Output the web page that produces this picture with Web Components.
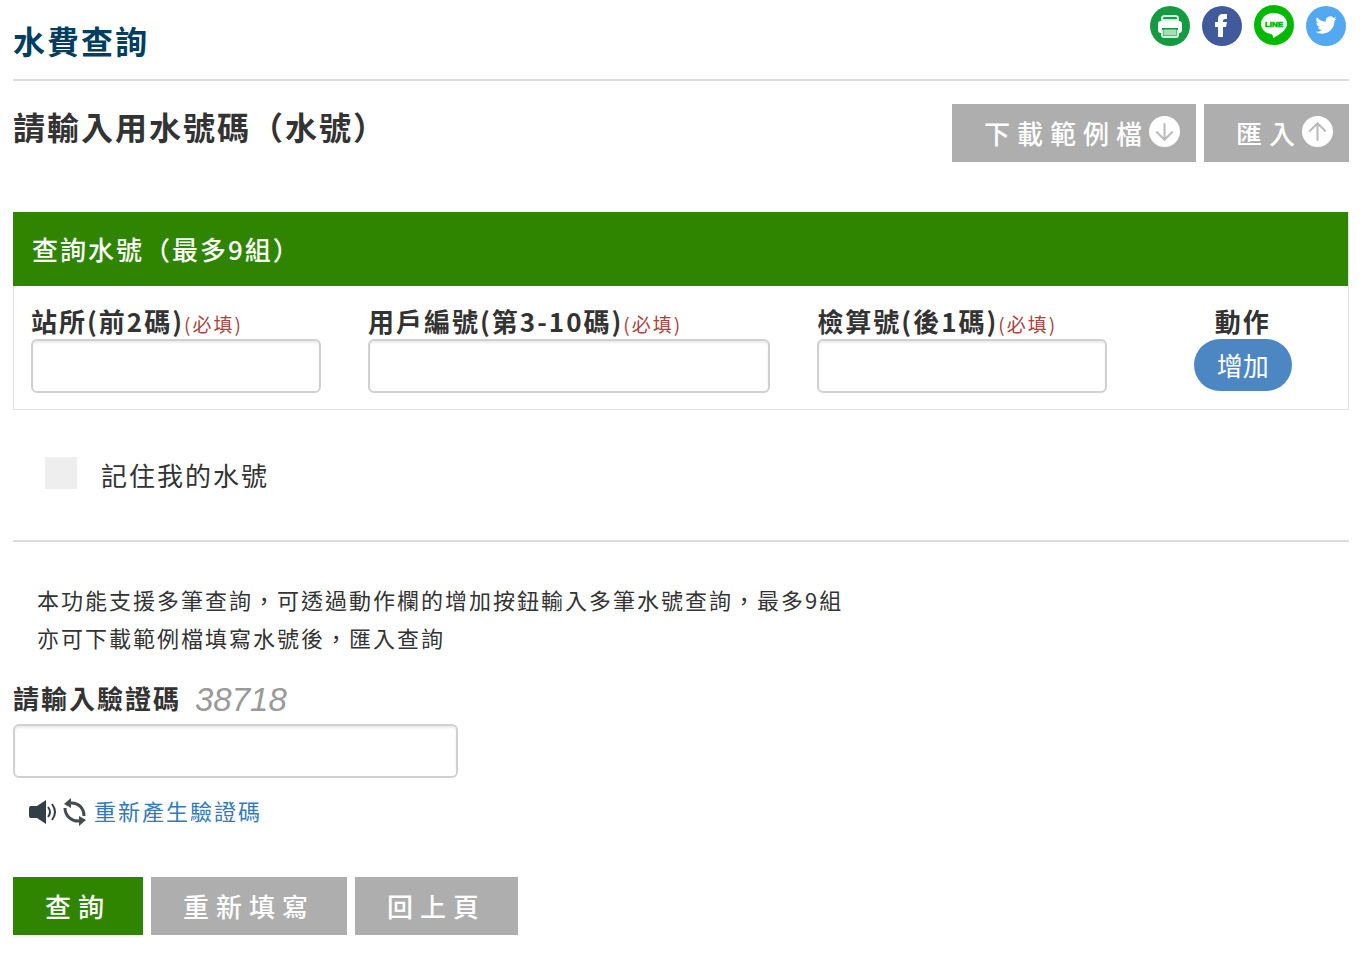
<!DOCTYPE html>
<html lang="zh-Hant">
<head>
<meta charset="utf-8">
<meta name="viewport" content="width=device-width, initial-scale=1">
<title>水費查詢</title>
<style>
    body {
        margin: 0;
        background: #fff;
        color: #333;
        font: 26px/36px "Noto Sans CJK TC", sans-serif;
        letter-spacing: 2px;
    }
</style>
</head>
<body>
<water-page>
    <page-header slot="header">水費查詢</page-header>

    <section-bar slot="intro">
        請輸入用水號碼（水號）
        <flat-button slot="actions" icon="down">下載範例檔</flat-button>
        <flat-button slot="actions" icon="up">匯入</flat-button>
    </section-bar>

    <query-panel>
        <span slot="title">查詢水號（最多9組）</span>
        <text-field name="station" required-note="(必填)">站所(前2碼)</text-field>
        <text-field name="user" required-note="(必填)">用戶編號(第3-10碼)</text-field>
        <text-field name="check" required-note="(必填)">檢算號(後1碼)</text-field>
        <add-action>動作</add-action>
    </query-panel>

    <remember-check>記住我的水號</remember-check>

    <help-text>
        <p>本功能支援多筆查詢，可透過動作欄的增加按鈕輸入多筆水號查詢，最多9組</p>
        <p>亦可下載範例檔填寫水號後，匯入查詢</p>
    </help-text>

    <captcha-field code="38718">請輸入驗證碼</captcha-field>

    <flat-button slot="buttons" primary>查詢</flat-button>
    <flat-button slot="buttons">重新填寫</flat-button>
    <flat-button slot="buttons">回上頁</flat-button>
</water-page>

<script>
    const INPUT_CSS = `
        input[type="text"] {
            display: block;
            box-sizing: border-box;
            width: 100%;
            height: 54px;
            padding: 8px 16px;
            border: 2px solid #d0d0d0;
            border-radius: 6px;
            background: #fff;
            box-shadow: inset 0 2px 2px rgba(0, 0, 0, .075);
            color: inherit;
            font: inherit;
        }
    `;

    class WaterPage extends HTMLElement {
        constructor() {
            super();
            const shadow = this.attachShadow({ mode: 'open' });
            shadow.innerHTML = `
            <style>
                :host {
                    display: block;
                    padding: 0 17px 30px 13px;
                }
                footer {
                    display: flex;
                    flex-wrap: wrap;
                    gap: 8px;
                    margin-top: 51px;
                }
            </style>
            <slot name="header"></slot>
            <main>
                <slot name="intro"></slot>
                <slot></slot>
            </main>
            <footer><slot name="buttons"></slot></footer>
            `;
        }
    }

    class PageHeader extends HTMLElement {
        constructor() {
            super();
            const shadow = this.attachShadow({ mode: 'open' });
            shadow.innerHTML = `
            <style>
                :host {
                    display: flex;
                    justify-content: space-between;
                    align-items: flex-start;
                    border-bottom: 2px solid #dcdcdc;
                }
                h1 {
                    margin: 16px 0 15px;
                    color: #003e5f;
                    font-size: 32px;
                    line-height: 48px;
                }
                nav {
                    display: flex;
                    gap: 12px;
                    padding: 6px 3px 0 0;
                }
                a, svg {
                    display: block;
                    width: 40px;
                    height: 40px;
                    overflow: visible;
                }
                text {
                    font: bold 8px "Liberation Sans", sans-serif;
                    letter-spacing: 0;
                }
            </style>
            <h1><slot></slot></h1>
            <nav>
                <a href="#print" aria-label="友善列印">
                    <svg viewBox="0 0 40 40">
                        <circle cx="20" cy="20" r="20" fill="#149b42"/>
                        <path d="M12 14v-2q0-2 3-2h10q3 0 3 2v2z" fill="#149b42" stroke="#d5eedc" stroke-width="2"/>
                        <path d="M11 15h18q3 0 3 3v6q0 3-3 3h-1v-5H12v5h-1q-3 0-3-3v-6q0-3 3-3z" fill="#fff"/>
                        <rect x="13" y="23" width="14" height="7" rx="1" fill="#a9dab9" stroke="#149b42"/>
                        <path d="M12 24v5q0 2 2 2h12q2 0 2-2v-5" fill="none" stroke="#d5eedc" stroke-width="2"/>
                    </svg>
                </a>
                <a href="#facebook" aria-label="Facebook">
                    <svg viewBox="0 0 40 40">
                        <circle cx="20" cy="20" r="20" fill="#405a9c"/>
                        <path d="M16 31V21h-3v-5h3v-3q0-5 5-5h4v5h-2q-2 0-2 2v1h4l-1 5h-3v10z" fill="#fff"/>
                    </svg>
                </a>
                <a href="#line" aria-label="LINE">
                    <svg viewBox="0 1 40 40">
                        <circle cx="20" cy="20" r="20" fill="#00b900"/>
                        <path d="M20 8c-8 0-13 5-13 11 0 5 4 9 10 10 2 1 2 2 2 4 6-3 14-8 14-14 0-6-5-11-13-11z" fill="#fff"/>
                        <text x="20" y="22" text-anchor="middle" fill="#00b900" stroke="#00b900" stroke-width=".6">LINE</text>
                    </svg>
                </a>
                <a href="#twitter" aria-label="Twitter">
                    <svg viewBox="0 0 40 40">
                        <circle cx="20" cy="20" r="20" fill="#52a9f0"/>
                        <path transform="translate(9.5 8.5) scale(.88)" fill="#fff" d="M23.95 4.57a10 10 0 0 1-2.82.77 4.96 4.96 0 0 0 2.16-2.72c-.95.55-2 .95-3.13 1.18a4.92 4.92 0 0 0-8.38 4.48C7.69 8.1 4.07 6.13 1.64 3.16a4.92 4.92 0 0 0 1.52 6.57 4.9 4.9 0 0 1-2.23-.61v.06c0 2.38 1.7 4.37 3.95 4.82a5 5 0 0 1-2.21.09 4.94 4.94 0 0 0 4.6 3.42A9.87 9.87 0 0 1 0 19.54a14 14 0 0 0 7.55 2.21c9.05 0 14-7.5 14-13.98 0-.21 0-.42-.02-.63a9.94 9.94 0 0 0 2.42-2.57z"/>
                    </svg>
                </a>
            </nav>
            `;
        }
    }

    class SectionBar extends HTMLElement {
        constructor() {
            super();
            const shadow = this.attachShadow({ mode: 'open' });
            shadow.innerHTML = `
            <style>
                :host {
                    display: flex;
                    justify-content: space-between;
                    align-items: flex-start;
                    margin: 23px 0 50px;
                }
                h2 {
                    margin: 0;
                    font-size: 32px;
                    line-height: 44px;
                }
                div {
                    display: flex;
                    gap: 8px;
                }
            </style>
            <h2><slot></slot></h2>
            <div><slot name="actions"></slot></div>
            `;
        }
    }

    class FlatButton extends HTMLElement {
        constructor() {
            super();
            const shadow = this.attachShadow({ mode: 'open' });
            const arrows = {
                down: 'M15 7v16M7 15l8 8 8-8',
                up: 'M15 24V7M7 15l8-8 8 8'
            };
            const arrow = arrows[this.getAttribute('icon')];
            const icon = arrow ? `
                <svg viewBox="0 0 30 30" aria-hidden="true">
                    <circle cx="15" cy="15" r="15" fill="#fff"/>
                    <path d="${arrow}" fill="none" stroke="#bbb" stroke-width="2"/>
                </svg>` : '';
            shadow.innerHTML = `
            <style>
                :host { display: block; }
                button {
                    display: flex;
                    align-items: center;
                    height: 58px;
                    padding: 0 32px;
                    border: 0;
                    background: #aeaeae;
                    color: #fff;
                    font: inherit;
                    font-weight: 500;
                    letter-spacing: 7px;
                    white-space: nowrap;
                    cursor: pointer;
                }
                :host([primary]) button { background: #308500; }
                :host([icon]) button { padding-right: 16px; }
                svg {
                    width: 31px;
                    height: 31px;
                    margin-bottom: 4px;
                }
            </style>
            <button type="button"><slot></slot>${icon}</button>
            `;
        }
    }

    class QueryPanel extends HTMLElement {
        constructor() {
            super();
            const shadow = this.attachShadow({ mode: 'open' });
            shadow.innerHTML = `
            <style>
                :host {
                    display: block;
                    border: 1px solid #e0e0e0;
                }
                header {
                    margin: -1px 0 0 -1px;
                    padding: 19px;
                    background: #308500;
                    color: #fff;
                    font-weight: 500;
                }
                .row {
                    display: grid;
                    grid-template-columns: 24fr 32fr 24fr 15fr;
                    padding: 17px 0 16px;
                }
                .row ::slotted(text-field) {
                    margin: 0 30px 0 17px;
                }
            </style>
            <header><slot name="title"></slot></header>
            <div class="row"><slot></slot></div>
            `;
        }
    }

    class TextField extends HTMLElement {
        constructor() {
            super();
            const shadow = this.attachShadow({ mode: 'open' });
            shadow.innerHTML = `
            <style>
                :host { display: block; }
                label {
                    display: block;
                    font-weight: bold;
                    line-height: 36px;
                    white-space: nowrap;
                }
                small {
                    color: #a94442;
                    font-size: 19px;
                    font-weight: normal;
                    line-height: 1;
                }
                ${INPUT_CSS}
            </style>
            <label for="field"><slot></slot><small>${this.getAttribute('required-note')}</small></label>
            <input type="text" id="field" name="${this.getAttribute('name')}"/>
            `;
        }
    }

    class AddAction extends HTMLElement {
        constructor() {
            super();
            const shadow = this.attachShadow({ mode: 'open' });
            shadow.innerHTML = `
            <style>
                :host {
                    display: flex;
                    flex-direction: column;
                    align-items: center;
                    font-weight: bold;
                }
                button {
                    width: 98px;
                    height: 52px;
                    padding: 0;
                    border: 0;
                    border-radius: 26px;
                    background: #4c87c3;
                    color: #fff;
                    font: inherit;
                    font-weight: normal;
                    letter-spacing: 0;
                    cursor: pointer;
                }
            </style>
            <slot></slot>
            <button type="button">增加</button>
            `;
        }
    }

    class RememberCheck extends HTMLElement {
        constructor() {
            super();
            const shadow = this.attachShadow({ mode: 'open' });
            shadow.innerHTML = `
            <style>
                :host {
                    display: flex;
                    padding: 47px 32px;
                    border-bottom: 2px solid #dcdcdc;
                }
                label {
                    display: flex;
                    align-items: flex-start;
                    gap: 24px;
                    line-height: 36px;
                }
                input {
                    appearance: none;
                    width: 32px;
                    height: 32px;
                    margin: 0;
                    background: #eee;
                }
                input:checked { background: #308500; }
            </style>
            <label><input type="checkbox"/><slot></slot></label>
            `;
        }
    }

    class HelpText extends HTMLElement {
        constructor() {
            super();
            const shadow = this.attachShadow({ mode: 'open' });
            shadow.innerHTML = `
            <style>
                :host {
                    display: block;
                    padding: 38px 24px 24px;
                    font-size: 22px;
                    line-height: 38px;
                }
                ::slotted(p) { margin: 0; }
            </style>
            <slot></slot>
            `;
        }
    }

    class CaptchaField extends HTMLElement {
        constructor() {
            super();
            const shadow = this.attachShadow({ mode: 'open' });
            shadow.innerHTML = `
            <style>
                :host { display: block; }
                .caption {
                    display: flex;
                    gap: 14px;
                    height: 44px;
                    font-weight: bold;
                }
                .code {
                    color: #999;
                    font: italic 33px/40px "Liberation Sans", sans-serif;
                    letter-spacing: 0;
                }
                .box { width: calc(100% / 3); }
                .tools {
                    display: flex;
                    align-items: center;
                    gap: 6px;
                    margin: 16px 0 0 16px;
                    font-size: 22px;
                    line-height: 32px;
                }
                button {
                    padding: 0;
                    border: 0;
                    background: none;
                    cursor: pointer;
                }
                a {
                    display: flex;
                    align-items: center;
                    gap: 7px;
                    color: #337ab7;
                    text-decoration: none;
                }
                svg {
                    display: block;
                    padding-top: 4px;
                }
                ${INPUT_CSS}
            </style>
            <div class="caption">
                <label for="captcha"><slot></slot></label>
                <span class="code">${this.getAttribute('code')}</span>
            </div>
            <div class="box"><input type="text" id="captcha" name="captcha"/></div>
            <div class="tools">
                <button type="button" aria-label="播放驗證碼">
                    <svg width="28" height="26" viewBox="0 0 28 26">
                        <path d="M2 7h6l9-6v24l-9-6H2q-2 0-2-2V9q0-2 2-2z" fill="#333f46"/>
                        <path d="M19 8q4 5 0 10M23 5q6 8 0 16" fill="none" stroke="#333f46" stroke-width="2"/>
                    </svg>
                </button>
                <a href="#refresh">
                    <svg width="24" height="28" viewBox="0 0 24 28" aria-hidden="true">
                        <path d="M7 5c8-1 14 5 14 13M17 23C9 24 2 18 2 10" fill="none" stroke="#444c50" stroke-width="3"/>
                        <path d="M1 6l7-6v10zM23 22l-7 6V18z" fill="#444c50"/>
                    </svg>
                    <span>重新產生驗證碼</span>
                </a>
            </div>
            `;
        }
    }

    customElements.define('water-page', WaterPage);
    customElements.define('page-header', PageHeader);
    customElements.define('section-bar', SectionBar);
    customElements.define('flat-button', FlatButton);
    customElements.define('query-panel', QueryPanel);
    customElements.define('text-field', TextField);
    customElements.define('add-action', AddAction);
    customElements.define('remember-check', RememberCheck);
    customElements.define('help-text', HelpText);
    customElements.define('captcha-field', CaptchaField);
</script>
</body>
</html>
